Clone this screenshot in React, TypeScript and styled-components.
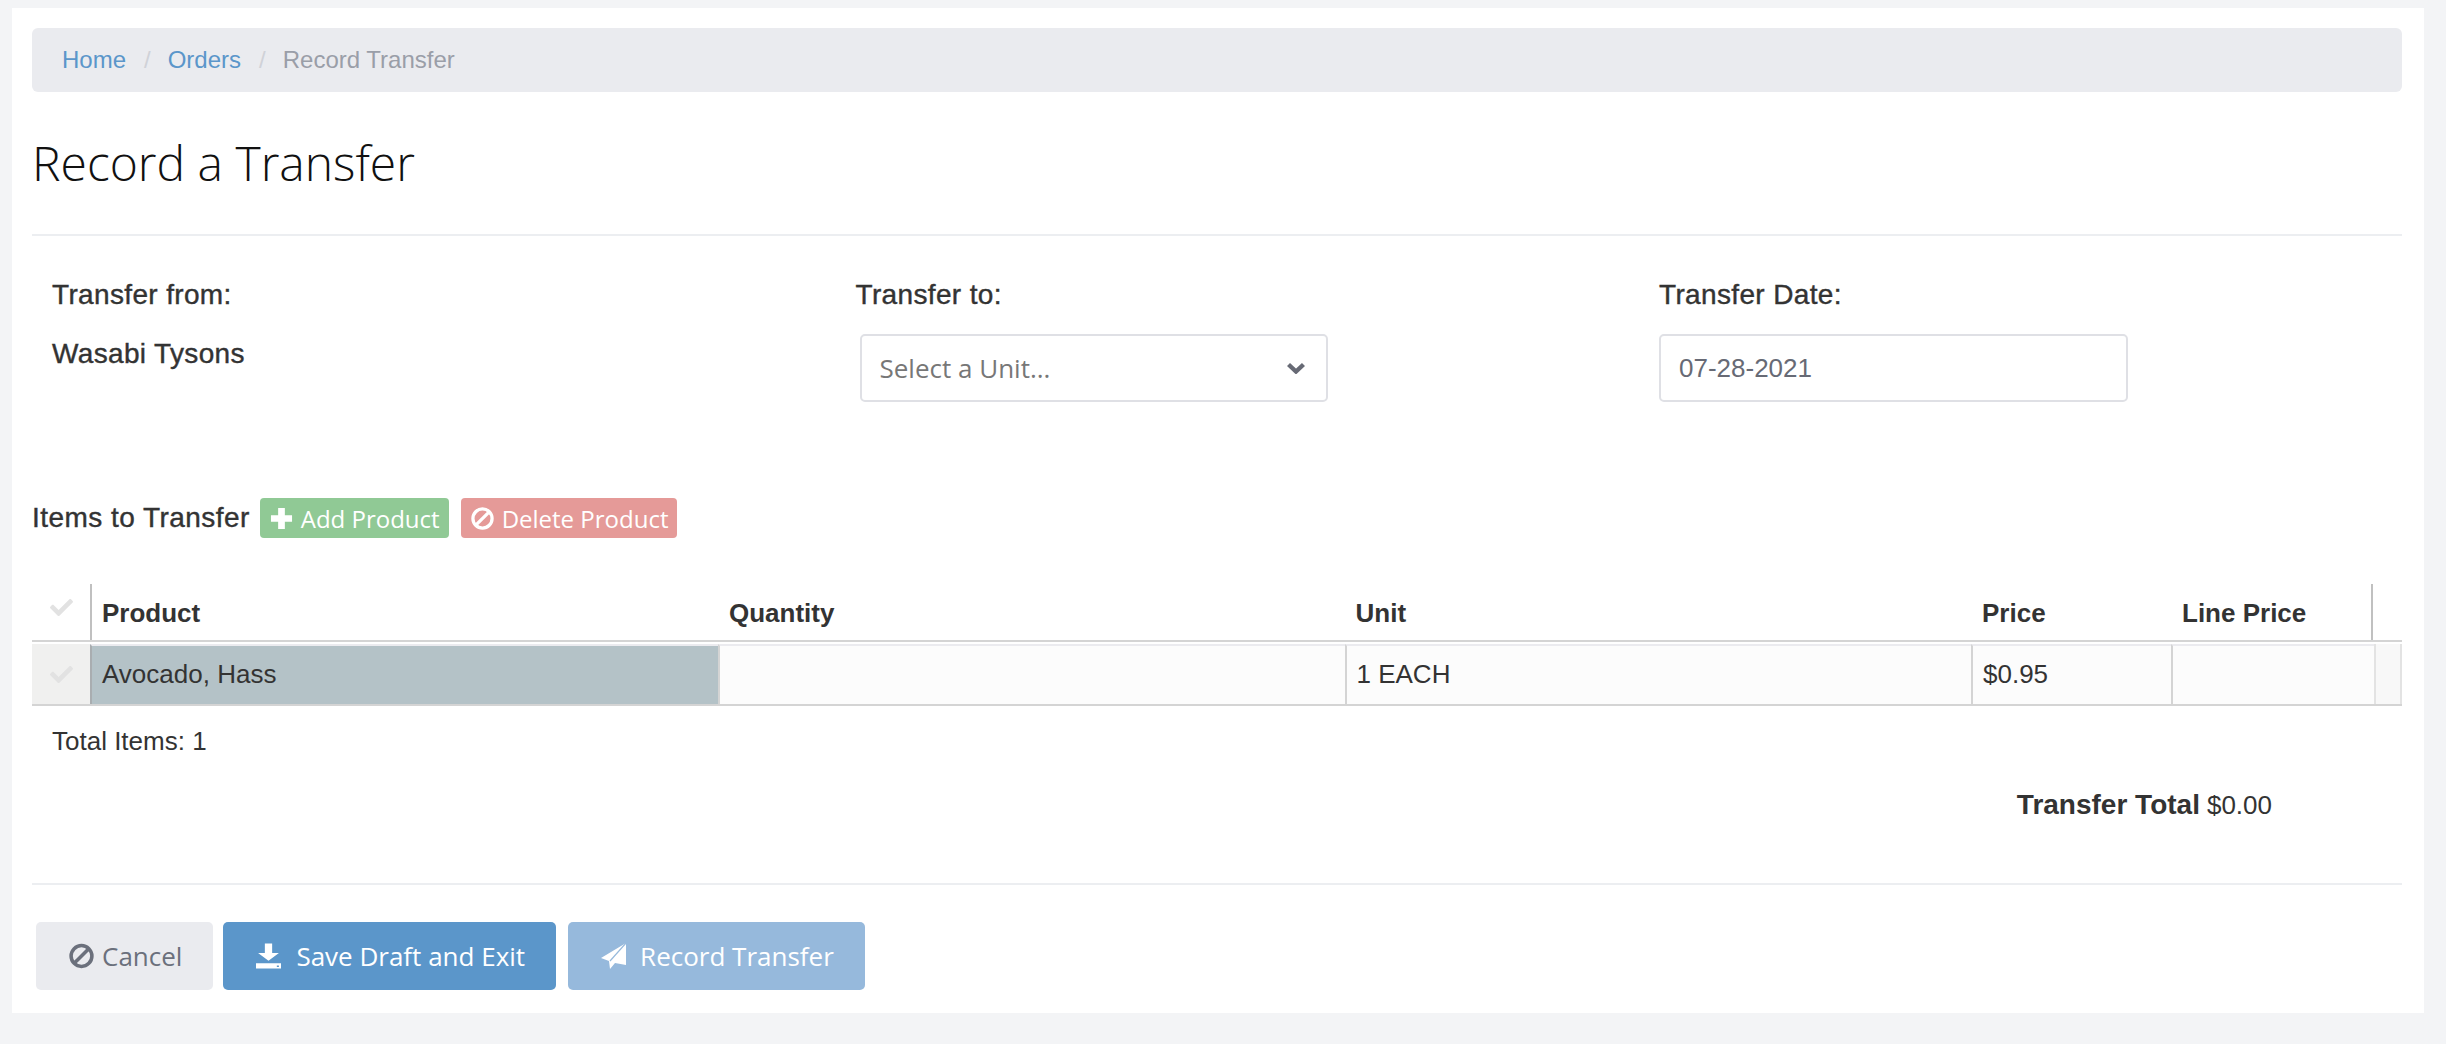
import { createGlobalStyle } from 'styled-components';
import styled from 'styled-components';
import { FaCheck } from 'react-icons/fa';

const GlobalStyle = createGlobalStyle`
  html, body {
    margin: 0;
    background: #f3f4f6;
  }
  * {
    box-sizing: border-box;
  }
`;

const sans = `'Liberation Sans', Arial, sans-serif`;
const open = `'Open Sans', 'Noto Sans', sans-serif`;

const Panel = styled.div`
  margin: 8px 22px 31px 12px;
  height: 1005px;
  padding: 20px 22px 0 20px;
  background: #fff;
  font-family: ${sans};
  color: #333;
`;

const Breadcrumb = styled.nav`
  display: flex;
  align-items: center;
  height: 64px;
  padding: 0 30px;
  border-radius: 6px;
  background: #eaebef;
  font-size: 24px;
`;

const Crumb = styled.span<{ current?: boolean }>`
  color: ${(props) => (props.current ? '#9a9ea8' : '#5b96ca')};
`;

const CrumbDivider = styled.span`
  margin: 0 17px 0 18px;
  color: #d0d2d8;
`;

const Title = styled.h1`
  margin: 0;
  padding: 39px 0;
  border-bottom: 2px solid #eceef1;
  font-family: ${open};
  font-size: 48px;
  font-weight: 300;
  line-height: 64px;
  color: #111;
`;

const FormRow = styled.div`
  display: grid;
  grid-template-columns: repeat(3, 803.5px);
  height: 262px;
  padding: 41px 0 0 20px;
`;

const Field = styled.div`
  display: flex;
  flex-direction: column;
  align-items: flex-start;
`;

const FieldLabel = styled.label`
  font-size: 28px;
  letter-spacing: 0.35px;
  line-height: 36px;
  -webkit-text-stroke: 0.4px #333;
`;

const StaticValue = styled(FieldLabel)`
  margin-top: 23px;
`;

const Select = styled.div`
  display: flex;
  align-items: center;
  justify-content: space-between;
  width: 468px;
  height: 68px;
  margin: 21px 0 0 4px;
  padding: 0 21px 0 18px;
  border: 2px solid #dfe0e5;
  border-radius: 5px;
  font-family: ${open};
  font-size: 26px;
  color: #777;
  svg {
    width: 18px;
    height: 12px;
    color: #676a75;
  }
`;

const DateInput = styled.div`
  display: flex;
  align-items: center;
  width: 469px;
  height: 68px;
  margin-top: 21px;
  padding: 0 18px;
  border: 2px solid #dfe0e5;
  border-radius: 5px;
  font-size: 26px;
  color: #676a75;
`;

const ItemsBar = styled.div`
  display: flex;
  align-items: center;
  gap: 12px;
  height: 40px;
`;

const ItemsLabel = styled.span`
  margin-right: -2px;
  font-size: 28px;
  letter-spacing: 0.45px;
  -webkit-text-stroke: 0.4px #333;
`;

const SmallButton = styled.button<{ color: string }>`
  display: flex;
  align-items: center;
  gap: 8px;
  height: 40px;
  padding: 0 9px 0 10px;
  border: 0;
  border-radius: 4px;
  background: ${(props) => props.color};
  font-family: ${open};
  font-size: 24px;
  color: #fff;
  svg {
    width: 23px;
    height: 23px;
  }
`;

const columns = '58px 628px 1fr 1fr 200px 203px 28px';
const headColumns = '58px 628px 1fr 1fr 200px 200px 31px';

const HeadRow = styled.div`
  display: grid;
  grid-template-columns: ${headColumns};
  height: 58px;
  margin-top: 46px;
  border-bottom: 2px solid #d4d4d4;
`;

const HeadCell = styled.div<{ divided?: boolean }>`
  display: flex;
  align-items: center;
  padding: 2px 0 0 ${(props) => (props.divided ? '10px' : '11px')};
  border-left: ${(props) => (props.divided ? '2px solid #c0c0c0' : '0')};
  font-size: 26px;
  font-weight: 700;
`;

const CheckCell = styled.div<{ shaded?: boolean }>`
  display: flex;
  align-items: center;
  justify-content: center;
  padding-bottom: ${(props) => (props.shaded ? '0' : '10px')};
  background: ${(props) => (props.shaded ? '#f0f0ef' : 'transparent')};
  svg {
    width: 23px;
    height: 23px;
    color: #e2e2e2;
  }
`;

const BodyRow = styled.div`
  display: grid;
  grid-template-columns: ${columns};
  height: 64px;
  padding-top: 2px;
  border-bottom: 2px solid #d4d4d4;
`;

const BodyCell = styled.div<{ highlight?: boolean }>`
  display: flex;
  align-items: center;
  padding: 0 0 2px 10px;
  border-left: 2px solid ${(props) => (props.highlight ? '#a9adb0' : '#d4d4d4')};
  border-top: 2px solid #ebebef;
  background: ${(props) => (props.highlight ? '#b4c2c7' : '#fcfcfc')};
  font-size: 26px;
`;

const EndCell = styled.div`
  border-left: 2px solid #e3e3e3;
  border-right: 2px solid #e3e3e3;
  background: #f8f8f8;
`;

const TotalItems = styled.div`
  padding: 20px 0 0 20px;
  font-size: 26px;
  line-height: 30px;
`;

const TransferTotal = styled.div`
  display: flex;
  justify-content: flex-end;
  gap: 7px;
  height: 129px;
  padding: 34px 130px 0 0;
  border-bottom: 2px solid #eceef1;
  font-size: 26px;
  line-height: 30px;
`;

const TotalLabel = styled.strong`
  font-size: 28px;
  font-weight: 700;
`;

const Actions = styled.div`
  display: flex;
  gap: 10px;
  padding: 37px 0 0 4px;
`;

const ActionButton = styled.button<{ bg: string; fg: string; iconGap: number }>`
  display: flex;
  align-items: center;
  gap: ${(props) => props.iconGap}px;
  height: 68px;
  padding: 0 31px 0 33px;
  border: 0;
  border-radius: 5px;
  background: ${(props) => props.bg};
  font-family: ${open};
  font-size: 26px;
  color: ${(props) => props.fg};
  svg {
    width: 25px;
    height: 26px;
  }
`;

const RecordButton = styled(ActionButton)`
  margin-left: 2px;
`;

function BanIcon() {
  return (
    <svg viewBox="0 0 24 24" fill="none" stroke="currentColor" strokeWidth="3.4">
      <circle cx="12" cy="12" r="10" />
      <path d="M5 19 19 5" />
    </svg>
  );
}

function PlusIcon() {
  return (
    <svg viewBox="0 0 24 24" fill="currentColor">
      <path d="M8.5 1h7v7.5H23v7h-7.5V23h-7v-7.5H1v-7h7.5z" />
    </svg>
  );
}

function ChevronIcon() {
  return (
    <svg viewBox="0 0 18 12" fill="none" stroke="currentColor" strokeWidth="4.4">
      <path d="M1.5 2.5 9 9.5l7.5-7" />
    </svg>
  );
}

function SaveIcon() {
  return (
    <svg viewBox="0 0 24 24" fill="currentColor">
      <path d="M8.5 0h7v9H22L12 16.5 2 9h6.5z" />
      <path fillRule="evenodd" d="M0 19h24v5H0zM20 21v1.5h2V21z" />
    </svg>
  );
}

function SendIcon() {
  return (
    <svg viewBox="0 0 25 26" fill="currentColor">
      <path d="M25 0 0 15l8 3 1 8 5-6 11 2z" />
      <path d="M25 0 9 18" fill="none" stroke="#96b9dc" strokeWidth="1.2" />
    </svg>
  );
}

function App() {
  return (
    <>
      <GlobalStyle />
      <Panel>
        <Breadcrumb>
          <Crumb>Home</Crumb>
          <CrumbDivider>/</CrumbDivider>
          <Crumb>Orders</Crumb>
          <CrumbDivider>/</CrumbDivider>
          <Crumb current>Record Transfer</Crumb>
        </Breadcrumb>
        <Title>Record a Transfer</Title>
        <FormRow>
          <Field>
            <FieldLabel>Transfer from:</FieldLabel>
            <StaticValue>Wasabi Tysons</StaticValue>
          </Field>
          <Field>
            <FieldLabel>Transfer to:</FieldLabel>
            <Select>
              Select a Unit...
              <ChevronIcon />
            </Select>
          </Field>
          <Field>
            <FieldLabel>Transfer Date:</FieldLabel>
            <DateInput>07-28-2021</DateInput>
          </Field>
        </FormRow>
        <ItemsBar>
          <ItemsLabel>Items to Transfer</ItemsLabel>
          <SmallButton color="#90c995">
            <PlusIcon />
            Add Product
          </SmallButton>
          <SmallButton color="#e59a98">
            <BanIcon />
            Delete Product
          </SmallButton>
        </ItemsBar>
        <HeadRow>
          <CheckCell>
            <FaCheck />
          </CheckCell>
          <HeadCell divided>Product</HeadCell>
          <HeadCell>Quantity</HeadCell>
          <HeadCell>Unit</HeadCell>
          <HeadCell>Price</HeadCell>
          <HeadCell>Line Price</HeadCell>
          <HeadCell divided />
        </HeadRow>
        <BodyRow>
          <CheckCell shaded>
            <FaCheck />
          </CheckCell>
          <BodyCell highlight>Avocado, Hass</BodyCell>
          <BodyCell />
          <BodyCell>1 EACH</BodyCell>
          <BodyCell>$0.95</BodyCell>
          <BodyCell />
          <EndCell />
        </BodyRow>
        <TotalItems>Total Items: 1</TotalItems>
        <TransferTotal>
          <TotalLabel>Transfer Total</TotalLabel>
          <span>$0.00</span>
        </TransferTotal>
        <Actions>
          <ActionButton bg="#eaebef" fg="#6b707c" iconGap={8}>
            <BanIcon />
            Cancel
          </ActionButton>
          <ActionButton bg="#5b96ca" fg="#fff" iconGap={15}>
            <SaveIcon />
            Save Draft and Exit
          </ActionButton>
          <RecordButton bg="#96b9dc" fg="#fff" iconGap={14}>
            <SendIcon />
            Record Transfer
          </RecordButton>
        </Actions>
      </Panel>
    </>
  );
}

export default App;
